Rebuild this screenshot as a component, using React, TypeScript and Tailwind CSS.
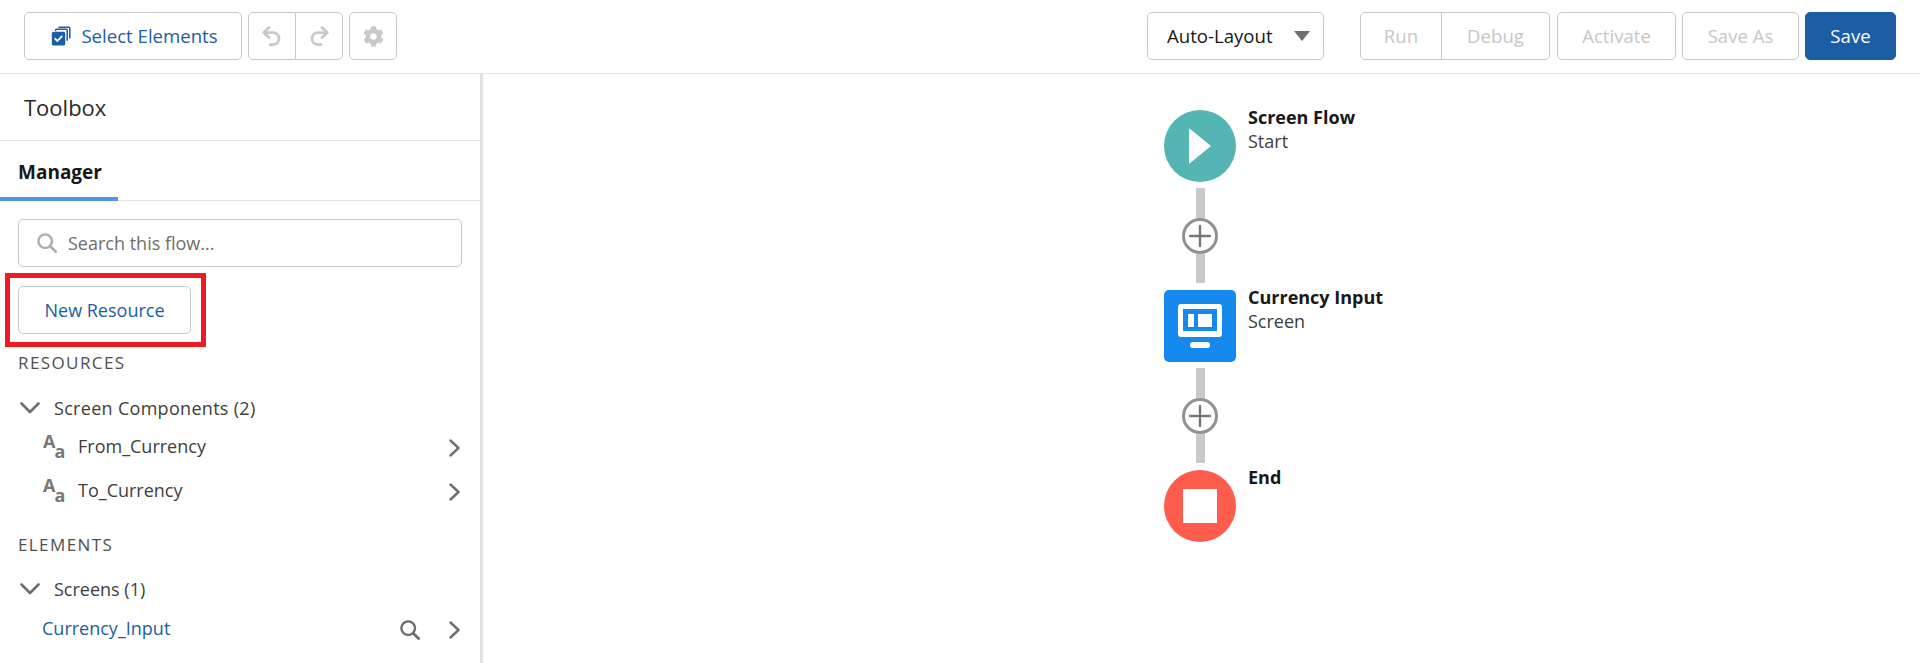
import React from 'react';
import { FaCog } from 'react-icons/fa';

const font = "font-['Open_Sans',sans-serif]";

function SelectIcon() {
  return (
    <svg width="20" height="20" viewBox="0 0 20 20" className="shrink-0">
      <path d="M8 1.2h9.8c.6 0 1 .4 1 1V12" fill="none" stroke="#1b5ea5" strokeWidth="1.5" strokeLinecap="round" />
      <path d="M4.6 4.4V4.2c0-.6.4-1 1-1h9.6c.6 0 1 .4 1 1v10" fill="none" stroke="#1b5ea5" strokeWidth="1.5" strokeLinecap="round" />
      <rect x="0.8" y="5.8" width="13.4" height="13.6" rx="1.6" fill="#1b5ea5" />
      <path d="M4.2 12.8l2.2 2.2 4.4-4.6" fill="none" stroke="#fff" strokeWidth="1.8" strokeLinecap="round" strokeLinejoin="round" />
    </svg>
  );
}

function UndoIcon({ flip }: { flip?: boolean }) {
  return (
    <svg width="20" height="20" viewBox="0 0 20 20" className={flip ? '-scale-x-100' : ''}>
      <path d="M7 1.5L1.8 6.6 7 11.6M2.6 6.6h8.2c3.6 0 6.2 2.6 6.2 6s-2.6 6-6.2 6H8" fill="none" stroke="#c9c9c9" strokeWidth="2.8" strokeLinecap="round" strokeLinejoin="round" />
    </svg>
  );
}

function SearchIcon({ color, className }: { color: string; className?: string }) {
  return (
    <svg width="20" height="20" viewBox="0 0 20 20" className={`shrink-0 ${className ?? ''}`}>
      <circle cx="8.2" cy="8.2" r="6.8" fill="none" stroke={color} strokeWidth="2.4" />
      <path d="M13.2 13.2L18.6 18.6" stroke={color} strokeWidth="2.8" strokeLinecap="round" />
    </svg>
  );
}

function ChevronDownIcon() {
  return (
    <svg width="20" height="12" viewBox="0 0 20 12" className="shrink-0">
      <path d="M1.5 1.5L10 10l8.5-8.5" fill="none" stroke="#706e6b" strokeWidth="2.6" strokeLinecap="round" strokeLinejoin="round" />
    </svg>
  );
}

function ChevronRightIcon() {
  return (
    <svg width="11" height="18" viewBox="0 0 11 18" className="shrink-0 mt-[3px]">
      <path d="M1.5 1.5L9.5 9l-8 7.5" fill="none" stroke="#706e6b" strokeWidth="2.4" strokeLinecap="round" strokeLinejoin="round" />
    </svg>
  );
}

function AaIcon() {
  return (
    <span className="flex w-[22px] h-[24px] shrink-0 items-start text-[#7a7876] leading-none font-bold">
      <span className="text-[18px] mt-[-2px]">A</span>
      <span className="text-[18px] mt-[8px] ml-[-1px]">a</span>
    </span>
  );
}

function ToolButton({ className, children }: { className?: string; children: React.ReactNode }) {
  return (
    <div className={`h-12 flex items-center justify-center border rounded-[5px] ${className ?? ''}`}>
      {children}
    </div>
  );
}

function SectionTitle({ className, children }: { className?: string; children: React.ReactNode }) {
  return (
    <div className={`pl-[18px] text-[17px] leading-[22px] tracking-[1.4px] text-[#514f4d] ${className ?? ''}`}>{children}</div>
  );
}

function GroupRow({ className, children }: { className?: string; children: React.ReactNode }) {
  return (
    <div className={`flex items-center h-[24px] pl-[20px] text-[18px] text-[#3e3e3c] ${className ?? ''}`}>
      <ChevronDownIcon />
      <span className="ml-[14px]">{children}</span>
    </div>
  );
}

function ResourceRow({ className, name }: { className?: string; name: string }) {
  return (
    <div className={`flex items-center h-[24px] pl-[43px] pr-[20px] text-[18px] text-[#3e3e3c] ${className ?? ''}`}>
      <AaIcon />
      <span className="ml-[13px] flex-1">{name}</span>
      <ChevronRightIcon />
    </div>
  );
}

function FlowConnector() {
  return (
    <div className="w-[72px] flex flex-col items-center">
      <div className="w-[9px] h-[30px] bg-[#c9c9c9]" />
      <div className="w-[36px] h-[36px] rounded-full border-[3px] border-[#919191] bg-white flex items-center justify-center">
        <svg width="22" height="22" viewBox="0 0 22 22">
          <path d="M11 1v20M1 11h20" stroke="#777" strokeWidth="2.4" strokeLinecap="round" />
        </svg>
      </div>
      <div className="w-[9px] h-[29px] bg-[#c9c9c9]" />
    </div>
  );
}

function FlowNode({ icon, title, subtitle }: { icon: React.ReactNode; title: string; subtitle?: string }) {
  return (
    <div className="flex">
      {icon}
      <div className="ml-[12px] text-[18px] leading-[24px] mt-[-5px]">
        <div className="font-bold text-[#181818]">{title}</div>
        {subtitle && <div className="text-[#3e3e3c]">{subtitle}</div>}
      </div>
    </div>
  );
}

export default function App() {
  return (
    <div className={`h-[663px] w-[1920px] overflow-hidden bg-white flex flex-col ${font}`}>
      <header className="h-[74px] shrink-0 border-b border-[#e5e5e5] pt-3 pl-6 pr-6 flex items-start text-[18.6px]">
        <ToolButton className="w-[218px] gap-[10px] pl-[3px] text-[#1b5ea5] border-[#c9c9c9]">
          <SelectIcon />
          <span>Select Elements</span>
        </ToolButton>
        <ToolButton className="w-[95px] ml-[6px] border-[#c9c9c9]">
          <div className="flex-1 flex justify-center items-center h-full border-r border-[#c9c9c9]">
            <UndoIcon />
          </div>
          <div className="flex-1 flex justify-center items-center h-full">
            <UndoIcon flip />
          </div>
        </ToolButton>
        <ToolButton className="w-[48px] ml-[6px] border-[#c9c9c9]">
          <FaCog size={21} color="#c9c9c9" />
        </ToolButton>
        <ToolButton className="w-[177px] ml-auto border-[#c9c9c9] text-[#181818]">
          <div className="w-full pl-[19px] pr-[13px] flex items-center justify-between">
            <span>Auto-Layout</span>
            <span className="w-0 h-0 border-x-[8px] border-x-transparent border-t-[10px] border-t-[#706e6b]" />
          </div>
        </ToolButton>
        <ToolButton className="w-[190px] ml-[36px] border-[#c9c9c9] text-[#c9c7c5]">
          <div className="w-[81px] flex justify-center items-center h-full border-r border-[#c9c9c9]">Run</div>
          <div className="flex-1 flex justify-center items-center h-full">Debug</div>
        </ToolButton>
        <ToolButton className="w-[119px] ml-[7px] border-[#c9c9c9] text-[#c9c7c5]">Activate</ToolButton>
        <ToolButton className="w-[117px] ml-[6px] border-[#c9c9c9] text-[#c9c7c5]">Save As</ToolButton>
        <ToolButton className="w-[91px] ml-[6px] border-[#1b5ea5] bg-[#1b5ea5] text-white">Save</ToolButton>
      </header>

      <div className="flex flex-1 min-h-0">
        <aside className="w-[483px] shrink-0 border-r-[3px] border-[#e2e2e2] flex flex-col">
          <div className="h-[67px] shrink-0 border-b border-[#e5e5e5] pl-6 flex items-center text-[22px] text-[#2b2826]">Toolbox</div>
          <div className="h-[60px] shrink-0 border-b border-[#e5e5e5] flex items-end">
            <div className="w-[118px] h-[60px] mb-[-1px] border-b-[4px] border-[#4d96ec] pl-[18px] pt-[17px] text-[19px] font-bold text-[#181818]">Manager</div>
          </div>
          <div className="mt-[18px] mx-[18px] h-[48px] shrink-0 border border-[#c9c9c9] rounded-[5px] flex items-center pl-[18px] text-[18px] text-[#706e6b]">
            <SearchIcon color="#b0adab" className="mr-[11px]" />
            Search this flow...
          </div>
          <div className="mt-[6px] ml-[5px] w-[201px] h-[74px] shrink-0 border-[5px] border-[#ed1c24] pl-[8px] pt-[8px]">
            <div className="w-[173px] h-[48px] border border-[#c9c9c9] rounded-[5px] flex items-center justify-center text-[18px] text-[#1b5ea5]">New Resource</div>
          </div>
          <SectionTitle className="mt-[5px]">RESOURCES</SectionTitle>
          <GroupRow className="mt-[22px] tracking-[0.3px]">Screen Components (2)</GroupRow>
          <ResourceRow className="mt-[14px]" name="From_Currency" />
          <ResourceRow className="mt-[20px]" name="To_Currency" />
          <SectionTitle className="mt-[32px]">ELEMENTS</SectionTitle>
          <GroupRow className="mt-[21px]">Screens (1)</GroupRow>
          <div className="mt-[15px] flex items-center h-[24px] pl-[42px] pr-[20px] text-[18px] text-[#1b5ea5]">
            <span className="flex-1">Currency_Input</span>
            <SearchIcon color="#706e6b" className="mr-[29px] mt-[3px]" />
            <ChevronRightIcon />
          </div>
        </aside>

        <main className="flex-1 min-w-0 pl-[681px] pt-[36px] flex flex-col items-start">
          <FlowNode
            title="Screen Flow"
            subtitle="Start"
            icon={
              <div className="w-[72px] h-[72px] rounded-full bg-[#54b5b3] flex items-center justify-center shrink-0">
                <svg width="24" height="36" viewBox="0 0 24 36">
                  <path d="M1.5 0.5L23 18 1.5 35.5Q1 36 1 35V1Q1 0 1.5 0.5z" fill="#fff" />
                </svg>
              </div>
            }
          />
          <div className="h-[6px]" />
          <FlowConnector />
          <div className="h-[7px]" />
          <FlowNode
            title="Currency Input"
            subtitle="Screen"
            icon={
              <div className="w-[72px] h-[72px] rounded-[5px] bg-[#1589ee] flex items-center justify-center shrink-0">
                <svg width="44" height="44" viewBox="0 0 44 44">
                  <rect x="0" y="0" width="44" height="33" rx="3" fill="#fff" />
                  <rect x="5" y="5" width="34" height="22" fill="#1589ee" />
                  <rect x="10" y="10" width="6" height="13" fill="#fff" />
                  <rect x="20" y="10" width="14" height="13" fill="#fff" />
                  <rect x="12" y="38" width="20" height="6" rx="3" fill="#fff" />
                </svg>
              </div>
            }
          />
          <div className="h-[6px]" />
          <FlowConnector />
          <div className="h-[7px]" />
          <FlowNode
            title="End"
            icon={
              <div className="w-[72px] h-[72px] rounded-full bg-[#fe5c4c] flex items-center justify-center shrink-0">
                <div className="w-[34px] h-[34px] bg-white" />
              </div>
            }
          />
        </main>
      </div>
    </div>
  );
}
